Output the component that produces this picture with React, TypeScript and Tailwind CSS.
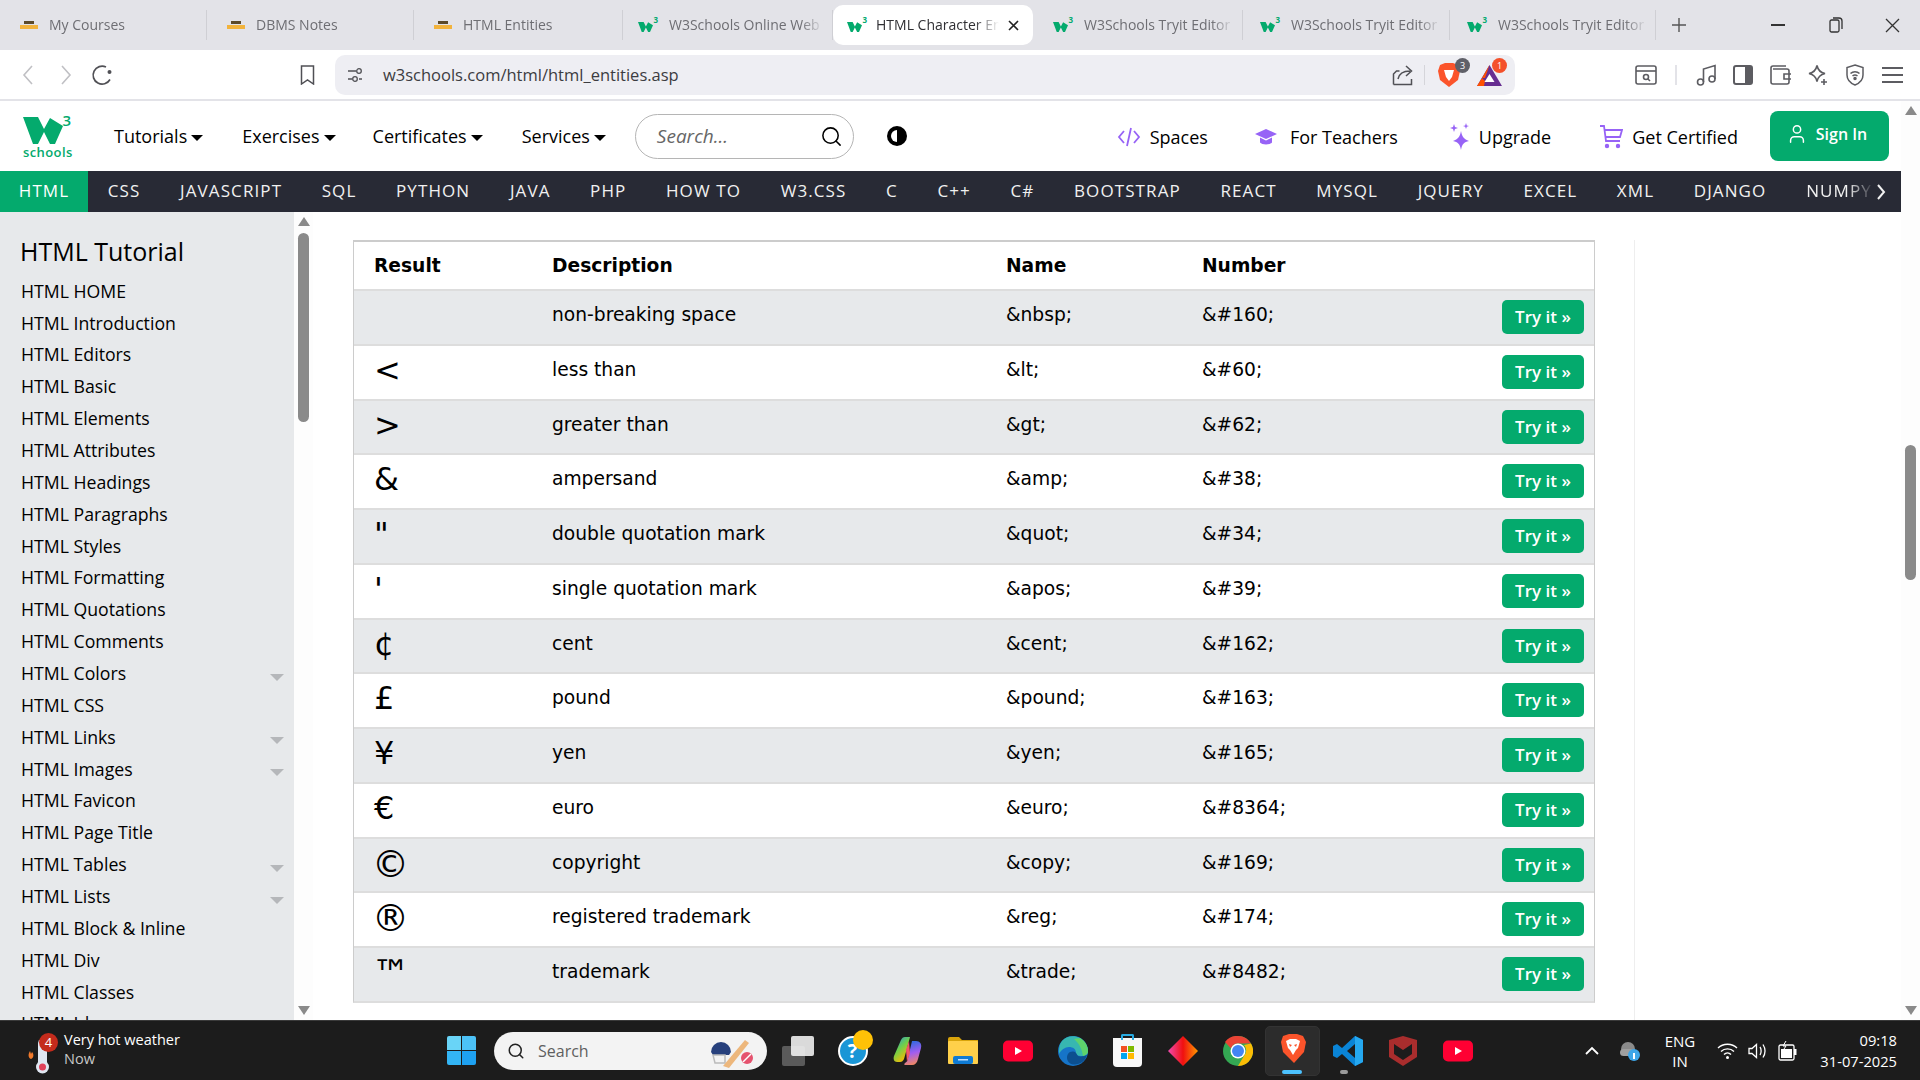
import type { ReactNode } from 'react';
import { Search, User } from 'lucide-react';

const ui = "font-['Open_Sans',sans-serif]";

const navItems = ['CSS', 'JAVASCRIPT', 'SQL', 'PYTHON', 'JAVA', 'PHP', 'HOW TO', 'W3.CSS', 'C', 'C++', 'C#', 'BOOTSTRAP', 'REACT', 'MYSQL', 'JQUERY', 'EXCEL', 'XML', 'DJANGO'];

const sideItems: [string, boolean?][] = [
  ['HTML HOME'], ['HTML Introduction'], ['HTML Editors'], ['HTML Basic'], ['HTML Elements'], ['HTML Attributes'],
  ['HTML Headings'], ['HTML Paragraphs'], ['HTML Styles'], ['HTML Formatting'], ['HTML Quotations'], ['HTML Comments'],
  ['HTML Colors', true], ['HTML CSS'], ['HTML Links', true], ['HTML Images', true], ['HTML Favicon'], ['HTML Page Title'],
  ['HTML Tables', true], ['HTML Lists', true], ['HTML Block & Inline'], ['HTML Div'], ['HTML Classes'], ['HTML Id'],
];

const rows = [
  ['\u00a0', 'non-breaking space', '&nbsp;', '&#160;'],
  ['<', 'less than', '&lt;', '&#60;'],
  ['>', 'greater than', '&gt;', '&#62;'],
  ['&', 'ampersand', '&amp;', '&#38;'],
  ['"', 'double quotation mark', '&quot;', '&#34;'],
  ["'", 'single quotation mark', '&apos;', '&#39;'],
  ['¢', 'cent', '&cent;', '&#162;'],
  ['£', 'pound', '&pound;', '&#163;'],
  ['¥', 'yen', '&yen;', '&#165;'],
  ['€', 'euro', '&euro;', '&#8364;'],
  ['©', 'copyright', '&copy;', '&#169;'],
  ['®', 'registered trademark', '&reg;', '&#174;'],
  ['™', 'trademark', '&trade;', '&#8482;'],
];

const wPath = 'M0 0H15L21 12 27 1 40 9 32 27H27L21 15 15 27H10Z';

function W3Mark() {
  return (
    <div className="relative w-[20px] h-[16px] shrink-0">
      <svg width="15" height="12" viewBox="0 0 40 27" className="absolute left-0 bottom-0"><path d={wPath} fill="#04AA6D" /></svg>
      <span className="absolute right-0 -top-[1px] text-[8px] leading-none font-bold text-[#04AA6D]">3</span>
    </div>
  );
}

function ApnaIcon() {
  return (
    <svg width="18" height="9" viewBox="0 0 18 9" className="shrink-0">
      <rect x="4" y="0" width="10" height="3" fill="#5c4a2a" />
      <rect x="0" y="4" width="18" height="4" fill="#f2b33c" />
    </svg>
  );
}

function Tab({ title, icon, width, pad = 'pl-5' }: { title: string; icon: ReactNode; width: string; pad?: string }) {
  return (
    <div className={`${width} ${pad} h-[30px] flex items-center pr-2 gap-[11px] border-r border-[#cfcfd4]`}>
      {icon}
      <span className="-mt-[2px] text-[14px] text-[#6e6e73] overflow-hidden whitespace-nowrap flex-1 [mask-image:linear-gradient(to_right,black_85%,transparent)]">{title}</span>
    </div>
  );
}

function TabBar() {
  return (
    <div className={`h-[50px] bg-[#e3e3e8] flex items-center ${ui}`}>
      <Tab title="My Courses" icon={<ApnaIcon />} width="w-[207px]" />
      <Tab title="DBMS Notes" icon={<ApnaIcon />} width="w-[207px]" />
      <Tab title="HTML Entities" icon={<ApnaIcon />} width="w-[209px]" />
      <Tab title="W3Schools Online Web Tutorials" icon={<W3Mark />} width="w-[210px]" pad="pl-[15px]" />
      <div className="w-[200px] h-[40px] bg-white rounded-[10px] flex items-center pl-[14px] pr-[14px] gap-[9px]">
        <W3Mark />
        <span className="-mt-[2px] text-[14px] text-[#2f2f33] overflow-hidden whitespace-nowrap flex-1 [mask-image:linear-gradient(to_right,black_80%,transparent)]">HTML Character Entities</span>
        <svg width="11" height="11" viewBox="0 0 11 11" stroke="#222" strokeWidth="1.6"><path d="M1 1l9 9M10 1l-9 9" /></svg>
      </div>
      <Tab title="W3Schools Tryit Editor" icon={<W3Mark />} width="w-[210px]" />
      <Tab title="W3Schools Tryit Editor" icon={<W3Mark />} width="w-[207px]" pad="pl-[17px]" />
      <Tab title="W3Schools Tryit Editor" icon={<W3Mark />} width="w-[206px]" pad="pl-[17px]" />
      <svg width="14" height="14" viewBox="0 0 14 14" stroke="#555" strokeWidth="1.4" className="ml-4"><path d="M7 0v14M0 7h14" /></svg>
      <div className="ml-auto flex items-center">
        <div className="w-[58px] flex justify-center"><div className="w-[14px] h-[1.5px] bg-[#333]" /></div>
        <div className="w-[57px] flex justify-center">
          <svg width="14" height="16" viewBox="0 0 14 16" fill="none" stroke="#333" strokeWidth="1.3"><rect x="1" y="3" width="9" height="12" rx="1.5" /><path d="M4 1h6a3 3 0 0 1 3 3v8" /></svg>
        </div>
        <div className="w-[56px] flex justify-center">
          <svg width="15" height="15" viewBox="0 0 15 15" stroke="#333" strokeWidth="1.3"><path d="M1 1l13 13M14 1L1 14" /></svg>
        </div>
      </div>
    </div>
  );
}

function AddressBar() {
  return (
    <div className={`h-[51px] bg-white border-b-[2px] border-[#e3e3e8] flex items-center ${ui}`}>
      <svg width="12" height="20" viewBox="0 0 12 20" fill="none" stroke="#c0c0c4" strokeWidth="1.6" className="ml-[22px]"><path d="M10 1L2 10l8 9" /></svg>
      <svg width="12" height="20" viewBox="0 0 12 20" fill="none" stroke="#c0c0c4" strokeWidth="1.6" className="ml-[26px]"><path d="M2 1l8 9-8 9" /></svg>
      <svg width="22" height="22" viewBox="0 0 22 22" fill="none" stroke="#505055" strokeWidth="1.7" className="ml-[19px]"><path d="M19 15.5A9 9 0 1 1 15 3" /><circle cx="18.5" cy="8" r="2" fill="#505055" stroke="none" /></svg>
      <svg width="15" height="20" viewBox="0 0 15 20" fill="none" stroke="#505055" strokeWidth="1.5" className="ml-[187px]"><path d="M1.5 1h12v18l-6-4-6 4z" /></svg>
      <div className="ml-[20px] w-[1180px] h-[40px] bg-[#eeeef3] rounded-[10px] flex items-center">
        <svg width="16" height="16" viewBox="0 0 16 16" fill="none" stroke="#505055" strokeWidth="1.3" className="ml-[12px]"><path d="M1 4h8M1 12h4M12 12h3" /><circle cx="12" cy="4" r="2.3" /><circle cx="8" cy="12" r="2.3" /></svg>
        <span className="ml-[20px] pt-[1px] text-[16.5px] text-[#3c3c41]">w3schools.com/html/html_entities.asp</span>
        <svg width="22" height="22" viewBox="0 0 22 22" fill="none" stroke="#505055" strokeWidth="1.5" className="ml-auto"><path d="M1.5 20.5V10l3-3h3M1.5 20.5h18V15M6 15c1-5 5-8 12-8M14 2l5.5 5-5.5 5" /></svg>
        <div className="w-[1px] h-[20px] bg-[#d5d5da] ml-[10px]" />
        <div className="relative ml-[12px] w-[26px] h-[26px]">
          <svg width="24" height="26" viewBox="0 0 24 26"><path d="M3 3l5-2h8l5 2 2 6-2 9-9 7-9-7-2-9z" fill="#fb542b" /><path d="M7 8h10l-2 7-3 4-3-4z" fill="#fff" /></svg>
          <div className="absolute -top-[4px] -right-[7px] w-[15px] h-[15px] rounded-full bg-[#5f6068] text-white text-[9px] leading-[15px] text-center">3</div>
        </div>
        <div className="relative ml-[14px] mr-[13px] w-[25px] h-[22px]">
          <svg width="25" height="22" viewBox="0 0 25 22"><path d="M12.5 1L25 22H0z" fill="#662d91" /><path d="M12.5 1L5 14h3z" fill="#ff5000" /><path d="M0 22l5-8 3 3-1 5z" fill="#ff5000" /><path d="M12.5 10l5 8h-10z" fill="#fff" /></svg>
          <div className="absolute -top-[6px] -right-[5px] w-[15px] h-[15px] rounded-full bg-[#f4502a] text-white text-[9px] leading-[15px] text-center">1</div>
        </div>
      </div>
      <svg width="22" height="20" viewBox="0 0 22 20" fill="none" stroke="#5c5c61" strokeWidth="1.6" className="ml-[120px]"><rect x="1" y="1" width="20" height="18" rx="2" /><path d="M1 6h20" /><circle cx="11" cy="12" r="2.5" /><path d="M13 14l2 2" /></svg>
      <div className="w-[2px] h-[20px] bg-[#e3e3e8] ml-[18px]" />
      <svg width="22" height="22" viewBox="0 0 22 22" fill="none" stroke="#5c5c61" strokeWidth="1.6" className="ml-[19px]"><circle cx="4.5" cy="18" r="3" /><circle cx="16" cy="15" r="3" /><path d="M7.5 18V5L19 1.5V15" /></svg>
      <div className="ml-[15px] w-[20px] h-[20px] border-[2px] border-[#5c5c61] rounded-[3px] flex justify-end"><div className="w-[6px] bg-[#5c5c61]" /></div>
      <svg width="22" height="20" viewBox="0 0 22 20" fill="none" stroke="#5c5c61" strokeWidth="1.6" className="ml-[17px]"><path d="M3 4h14a2 2 0 0 1 2 2v11a2 2 0 0 1-2 2H3a2 2 0 0 1-2-2V3a2 2 0 0 1 2-2h13" /><path d="M21 9h-7v5h7" /></svg>
      <svg width="22" height="22" viewBox="0 0 22 22" fill="none" stroke="#5c5c61" strokeWidth="1.6" className="ml-[15px]"><path d="M10 1.5c1 5 3 7 8 8-5 1-7 3-8 8-1-5-3-7-8-8 5-1 7-3 8-8zM17 15v6M14 18h6" /></svg>
      <svg width="20" height="22" viewBox="0 0 20 22" fill="none" stroke="#5c5c61" strokeWidth="1.5" className="ml-[16px]"><path d="M10 1l8 2.5V11c0 5-3 8-8 10-5-2-8-5-8-10V3.5z" /><path d="M5.5 9.5c2.5-2.5 6.5-2.5 9 0M7.500 12c1.500-1.300 3.500-1.300 5 0" /><circle cx="10" cy="14.5" r="1" fill="#5c5c61" /></svg>
      <div className="ml-[17px] w-[21px] flex flex-col gap-[5px]">
        <div className="h-[2px] bg-[#5c5c61]" /><div className="h-[2px] bg-[#5c5c61]" /><div className="h-[2px] bg-[#5c5c61]" />
      </div>
    </div>
  );
}

function Caret() {
  return <span className="inline-block ml-[4px] border-x-[6px] border-x-transparent border-t-[6px] border-t-black align-middle" />;
}

function SiteHeader() {
  return (
    <div className={`h-[70px] flex items-center ${ui}`}>
      <div className="relative ml-[23px] w-[48px] h-[44px] mt-[1px] shrink-0">
        <svg width="40" height="27" viewBox="0 0 40 27" className="absolute left-0 top-[2px]"><path d={wPath} fill="#04AA6D" /></svg>
        <span className="absolute right-0 -top-[2px] text-[15px] font-semibold leading-none text-[#04AA6D]">3</span>
        <span className="absolute left-0 bottom-0 text-[13px] font-semibold leading-none tracking-[0.4px] text-[#04AA6D]">schools</span>
      </div>
      <div className="ml-[43px] text-[18px] text-black whitespace-nowrap">Tutorials<Caret /></div>
      <div className="ml-[39px] text-[18px] text-black whitespace-nowrap">Exercises<Caret /></div>
      <div className="ml-[37px] text-[18px] text-black whitespace-nowrap">Certificates<Caret /></div>
      <div className="ml-[39px] text-[18px] text-black whitespace-nowrap">Services<Caret /></div>
      <div className="ml-[29px] w-[219px] h-[45px] rounded-[23px] border border-[#b5b5b5] flex items-center pl-[21px] pr-[10px]">
        <span className="text-[19px] italic text-[#666]">Search...</span>
        <Search size={23} strokeWidth={1.6} className="ml-auto text-black" />
      </div>
      <svg width="20" height="20" viewBox="0 0 20 20" className="ml-[33px]">
        <circle cx="10" cy="10" r="10" fill="#000" />
        <path d="M10 4a6 6 0 0 0 0 12z" fill="#fff" />
      </svg>
      <div className="ml-auto flex items-center text-[18px] text-black pt-[2px]">
        <svg width="24" height="22" viewBox="0 0 24 22" fill="none" stroke="#9763f6" strokeWidth="1.8"><path d="M7 5l-5 6 5 6M17 5l5 6-5 6M14 2l-4 18" /></svg>
        <span className="ml-[9px]">Spaces</span>
        <svg width="22" height="20" viewBox="0 0 22 20" fill="#9763f6" className="ml-[47px]"><path d="M11 2L22 7 11 12 0 7z" /><path d="M5 10.5v5c2 2.5 10 2.5 12 0v-5l-6 3z" /></svg>
        <span className="ml-[13px]">For Teachers</span>
        <svg width="22" height="28" viewBox="0 0 22 28" fill="#9763f6" className="ml-[52px]"><path d="M11 8c1 6 3 8 8 10-5 1-7 3-8 9-1-6-3-8-8-9 5-2 7-4 8-10z" /><path d="M4 1l1 3 3 1-3 1-1 3-1-3-3-1 3-1zM16 0l.8 2.5 2.2.5-2.2.8L16 6l-.8-2.2L13 3l2.2-.5z" /></svg>
        <span className="ml-[7px]">Upgrade</span>
        <svg width="24" height="24" viewBox="0 0 24 24" fill="none" stroke="#9763f6" strokeWidth="1.8" className="ml-[48px]"><path d="M1 1h4l2 15h14M5.5 5H23l-2 7H6.5" /><circle cx="8" cy="21" r="1.3" fill="#9763f6" /><circle cx="19" cy="21" r="1.3" fill="#9763f6" /></svg>
        <span className="ml-[9px]">Get Certified</span>
      </div>
      <div className="ml-[32px] mr-[12px] w-[119px] h-[50px] -mt-[1px] rounded-[8px] bg-[#04AA6D] text-white flex items-center justify-center gap-[8px] text-[16px] font-semibold pb-[3px] pr-[6px]">
        <User size={22} strokeWidth={1.6} />
        Sign In
      </div>
    </div>
  );
}

function TopNav() {
  return (
    <div className={`h-[41px] bg-[#282A35] text-[#f1f1f1] flex items-center text-[17px] tracking-[1.1px] whitespace-nowrap ${ui} overflow-hidden`}>
      <div className="h-full w-[88px] shrink-0 bg-[#04AA6D] text-white flex items-center justify-center pb-[2px]">HTML</div>
      {navItems.map((n) => (
        <div key={n} className="px-[19.8px] pb-[2px] shrink-0">{n}</div>
      ))}
      <div className="pl-[20px] pb-[2px] flex-1 min-w-0 overflow-hidden [mask-image:linear-gradient(to_right,black_70%,transparent)]">NUMPY</div>
      <svg width="10" height="16" viewBox="0 0 10 16" fill="none" stroke="#f1f1f1" strokeWidth="2" className="ml-[2px] mr-[15px] shrink-0"><path d="M2 1l6 7-6 7" /></svg>
    </div>
  );
}

function Triangle({ up, className = '' }: { up?: boolean; className?: string }) {
  return (
    <div className={`w-0 h-0 border-x-[6px] border-x-transparent ${up ? 'border-b-[9px] border-b-[#8a8a8a]' : 'border-t-[9px] border-t-[#8a8a8a]'} ${className}`} />
  );
}

function Sidebar() {
  return (
    <div className={`w-[294px] shrink-0 bg-[#e7e9eb] overflow-hidden text-black ${ui}`}>
      <div className="pl-[20px] pt-[21px] text-[25px] leading-[36px]">HTML Tutorial</div>
      <div className="mt-[6px]">
        {sideItems.map(([name, more]) => (
          <div key={name} className="h-[31.87px] pl-[21px] pr-[10px] flex items-center text-[17.7px]">
            {name}
            {more && <div className="ml-auto mt-[8px] w-0 h-0 border-x-[7px] border-x-transparent border-t-[7px] border-t-[#b5b7ba]" />}
          </div>
        ))}
      </div>
    </div>
  );
}

function Scrollbar({ thumb, className = '' }: { thumb: string; className?: string }) {
  return (
    <div className={`w-[19px] shrink-0 bg-[#fdfdfd] flex flex-col items-center pt-[5px] ${className}`}>
      <Triangle up />
      <div className={`w-[11px] rounded-[6px] bg-[#8a8a8a] ${thumb}`} />
      <Triangle className="mt-auto mb-[5px]" />
    </div>
  );
}

const glyphClass: Record<string, string> = {
  '©': 'w-[180px] -ml-[2px] text-[37px] leading-[52px]',
  '®': 'w-[180px] -ml-[2px] text-[37px] leading-[52px]',
  '™': 'w-[180px] -ml-[2px] text-[38px] leading-[52px]',
};

function EntityTable() {
  return (
    <div className="w-[1242px] ml-[40px] mt-[28px] border-x border-t-2 border-[#cccccc] border-b-2 border-b-[#dddddd] text-black font-['DejaVu_Sans',sans-serif] text-[18.67px]">
      <div className="h-[47px] flex items-center font-bold text-[18.67px] pl-[20px]">
        <div className="w-[178px]">Result</div>
        <div className="w-[454px]">Description</div>
        <div className="w-[196px]">Name</div>
        <div>Number</div>
      </div>
      {rows.map(([glyph, desc, name, num], i) => (
        <div
          key={desc}
          className={`h-[54.78px] flex items-start pl-[20px] pr-[10px] border-t-2 border-[#dddddd] ${i % 2 === 0 ? 'bg-[#e7e9eb]' : 'bg-white'}`}
        >
          <div className={`h-full shrink-0 ${glyphClass[glyph] ?? 'w-[178px] text-[32px] leading-[49px]'}`}>{glyph}</div>
          <div className="w-[454px] leading-[24px] pt-[12px]">{desc}</div>
          <div className="w-[196px] leading-[24px] pt-[12px]">{name}</div>
          <div className="leading-[24px] pt-[12px]">{num}</div>
          <div className={`ml-auto mt-[9px] w-[82px] h-[34px] rounded-[5px] bg-[#04AA6D] text-white text-[17px] leading-[33px] text-center font-semibold ${ui}`}>Try it »</div>
        </div>
      ))}
    </div>
  );
}

function Slot({ children, active, dot }: { children: ReactNode; active?: boolean; dot?: boolean }) {
  return (
    <div className="relative w-[55px] h-[50px] flex items-center justify-center">
      {active && <div className="absolute inset-0 rounded-[5px] bg-[#2c2c2c] border border-[#333]" />}
      <div className="relative">{children}</div>
      {active && <div className="absolute bottom-[2px] left-[17px] w-[20px] h-[4px] rounded-[2px] bg-[#4cc2ff]" />}
      {dot && <div className="absolute bottom-[2px] left-[20px] w-[8px] h-[4px] rounded-[2px] bg-[#9a9a9a]" />}
    </div>
  );
}

function YouTubeIcon() {
  return (
    <svg width="30" height="22" viewBox="0 0 30 22">
      <rect width="30" height="21" y="0.5" rx="5" fill="#ff0033" />
      <path d="M12 7l7 4-7 4z" fill="#fff" />
    </svg>
  );
}

function Taskbar() {
  return (
    <div className={`h-[60px] shrink-0 bg-[#1c1c1c] border-t border-[#3a3a3a] flex items-center text-white relative ${ui}`}>
      <div className="relative ml-[26px] w-[30px] h-[44px]">
        <svg width="30" height="44" viewBox="0 0 30 44" className="absolute left-0 top-[6px]">
          <path d="M4 16c-2 3-2 7 1 8 3-1 3-5 1-7l-1 2z" fill="#f0792b" />
          <rect x="12" y="4" width="9" height="28" rx="4.5" fill="#dfe6f1" />
          <circle cx="16.5" cy="32" r="6.5" fill="#dfe6f1" />
          <circle cx="16.5" cy="32" r="3.5" fill="#e0405a" />
        </svg>
        <div className="absolute left-[13px] top-[4px] w-[19px] h-[19px] rounded-full bg-[#c42b1c] text-white text-[13px] leading-[19px] text-center">4</div>
      </div>
      <div className="ml-[8px] w-[150px] text-[14.5px] leading-[19px] -mt-[4px]">
        <div>Very hot weather</div>
        <div className="text-[#c8c8c8]">Now</div>
      </div>
      <div className="ml-[233px] w-[29px] h-[29px] grid grid-cols-2 gap-[1px]">
        <div className="bg-[#69d4f7] rounded-tl-[2px]" /><div className="bg-[#4cc2f7] rounded-tr-[2px]" />
        <div className="bg-[#33b5f5] rounded-bl-[2px]" /><div className="bg-[#1ea1f1] rounded-br-[2px]" />
      </div>
      <div className="ml-[18px] w-[273px] h-[38px] rounded-[19px] bg-[#f3f3f3] flex items-center pl-[13px] pr-[10px] text-[#5f5f5f]">
        <Search size={18} strokeWidth={2} className="text-[#222]" />
        <span className="ml-[13px] text-[16px]">Search</span>
        <svg width="50" height="34" viewBox="0 0 50 34" className="ml-auto">
          <path d="M4 18a10 10 0 0 1 20 0l-2 3H6z" fill="#27407c" />
          <path d="M6 21h12v8H8z" fill="none" stroke="#bbb" strokeWidth="1.5" />
          <path d="M16 32L38 6l4 3-20 25z" fill="#edb77c" />
          <circle cx="40" cy="24" r="6" fill="#e5526e" />
          <path d="M36 28l8-8" stroke="#fff" strokeWidth="1.5" />
        </svg>
      </div>
      <div className="ml-[3px] flex items-center">
        <Slot>
          <div className="relative w-[32px] h-[30px]">
            <div className="absolute left-0 bottom-0 w-[23px] h-[20px] rounded-[2px] bg-[#5a5a5a]" />
            <div className="absolute right-0 top-0 w-[23px] h-[20px] rounded-[2px] bg-[#f0f0f0]/90" />
          </div>
        </Slot>
        <Slot>
          <div className="relative w-[30px] h-[30px] rounded-full bg-[#1a96d6] border-2 border-white text-white text-[20px] font-bold leading-[26px] text-center">
            ?
            <div className="absolute -top-[8px] left-[13px] w-[20px] h-[20px] rounded-full bg-[#ffc107]" />
          </div>
        </Slot>
        <Slot>
          <svg width="29" height="30" viewBox="0 0 29 30">
            <defs>
              <linearGradient id="copA" x1="0" y1="0" x2="0.6" y2="1">
                <stop offset="0" stopColor="#1f8fe8" /><stop offset="0.5" stopColor="#6fcf4a" /><stop offset="1" stopColor="#ffb900" />
              </linearGradient>
              <linearGradient id="copB" x1="0.4" y1="0" x2="0.6" y2="1">
                <stop offset="0" stopColor="#2b6be0" /><stop offset="0.5" stopColor="#a25df0" /><stop offset="1" stopColor="#f58a5a" />
              </linearGradient>
            </defs>
            <path d="M8 4c1-2 2-3 4-3h5l-4 15-2 7c-1 2-2 3-4 3H4c-3 0-4-3-3-6z" fill="url(#copA)" />
            <path d="M19 5h4c4 0 6 3 5 7l-3 11c-1 4-3 6-6 6h-7c-1 0-1-1 0-2 2-1 3-3 3-5z" fill="url(#copB)" />
            <path d="M13 14l3-9 1 12-3 9z" fill="#f0566a" />
          </svg>
        </Slot>
        <Slot>
          <svg width="30" height="27" viewBox="0 0 30 27">
            <path d="M0 2a2 2 0 0 1 2-2h9l3 3h16v6H0z" fill="#d9a40b" />
            <rect y="4" width="30" height="23" rx="1" fill="#ffd04a" />
            <rect x="5" y="19" width="20" height="8" rx="2" fill="#0f7bd4" />
            <rect x="10" y="22" width="10" height="1.5" fill="#bfe0ff" />
          </svg>
        </Slot>
        <Slot><YouTubeIcon /></Slot>
        <Slot>
          <svg width="30" height="30" viewBox="0 0 30 30">
            <circle cx="15" cy="15" r="15" fill="#1674c8" />
            <path d="M4 5C8 0 16-1 22 2c5 3 8 8 8 13 0 4-3 5-7 5-3 0-5-1-5-3 0-4-3-6-7-6-4 0-8 3-10 7 0-5 0-9 3-13z" fill="#37b7b0" />
            <path d="M22 2c5 3 8 8 8 13 0 3-2 4-5 5-1-6-3-12-9-17z" fill="#5ed36c" />
            <path d="M13 28c-4-2-5-7-3-10 2-3 6-3 8-1l2 3c3 1 7 0 9-1-2 7-9 11-16 9z" fill="#0c4f8f" />
          </svg>
        </Slot>
        <Slot>
          <div className="relative w-[29px] h-[29px] mt-[3px] bg-[#f7f7f7] rounded-b-[4px] grid grid-cols-2 gap-[1px] p-[8px]">
            <div className="absolute -top-[4px] left-[8px] w-[13px] h-[6px] border-x-2 border-t-2 border-[#29abe2] rounded-t-[2px]" />
            <div className="bg-[#f25022]" /><div className="bg-[#7fba00]" /><div className="bg-[#00a4ef]" /><div className="bg-[#ffb900]" />
          </div>
        </Slot>
        <Slot>
          <svg width="30" height="30" viewBox="0 0 30 30">
            <defs>
              <linearGradient id="dia" x1="0" y1="0" x2="1" y2="0">
                <stop offset="0" stopColor="#f04bb0" /><stop offset="0.5" stopColor="#f01010" /><stop offset="1" stopColor="#ff9a00" />
              </linearGradient>
            </defs>
            <path d="M15 0l15 15-15 15L0 15z" fill="url(#dia)" />
          </svg>
        </Slot>
        <Slot>
          <svg width="30" height="30" viewBox="0 0 30 30">
            <circle cx="15" cy="15" r="15" fill="#34a853" />
            <path d="M15 0a15 15 0 0 1 13 7.5H15a7.5 7.5 0 0 0-7 5L2 6A15 15 0 0 1 15 0z" fill="#ea4335" />
            <path d="M28 7.5A15 15 0 0 1 15 30l6.5-11A7.5 7.5 0 0 0 21 9z" fill="#fbbc05" />
            <circle cx="15" cy="15" r="7.5" fill="#fff" />
            <circle cx="15" cy="15" r="6" fill="#4285f4" />
          </svg>
        </Slot>
        <Slot active>
          <svg width="26" height="30" viewBox="0 0 26 30" className="-mt-[6px]">
            <path d="M3 3l6-2h8l6 2 3 6-2 10-10 11L3 19 1 9z" fill="#fb542b" />
            <path d="M6 8l4-2h6l4 2-2 7-2 2-3 5-3-5-2-2z" fill="#fff" />
            <path d="M9 11l3 1-2 2zM17 11l-3 1 2 2z" fill="#fb542b" />
          </svg>
        </Slot>
        <Slot dot>
          <svg width="30" height="30" viewBox="0 0 30 30">
            <path d="M22 0l8 4v22l-8 4L9 18l-5 4-4-2v-10l4-2 5 4z" fill="#0a84d6" />
            <path d="M22 0l8 4v22l-8 4z" fill="#25a8f0" />
            <path d="M22 8l-8 7 8 7z" fill="#1c1c1c" />
          </svg>
        </Slot>
        <Slot>
          <svg width="28" height="30" viewBox="0 0 28 30">
            <path d="M0 4l14-4 14 4v17l-14 9-14-9z" fill="#a92d2d" />
            <path d="M5 8v10l9 6 9-6V8l-9 6z" fill="#1c1c1c" />
          </svg>
        </Slot>
        <Slot><YouTubeIcon /></Slot>
      </div>
      <svg width="14" height="9" viewBox="0 0 14 9" fill="none" stroke="#fff" strokeWidth="1.8" className="ml-[100px]"><path d="M1 8l6-6 6 6" /></svg>
      <svg width="22" height="22" viewBox="0 0 22 22" className="ml-[20px]">
        <circle cx="9" cy="9" r="7" fill="#8a8a8a" />
        <rect x="1" y="9" width="14" height="7" rx="3.5" fill="#a0a0a0" />
        <circle cx="15" cy="15" r="6" fill="#3ea6e8" />
        <rect x="14" y="13" width="2" height="6" fill="#fff" />
      </svg>
      <div className="ml-[22px] w-[34px] text-center text-[15px] leading-[20px]">ENG<br />IN</div>
      <svg width="21" height="20" viewBox="0 0 21 20" fill="none" stroke="#fff" strokeWidth="1.4" className="ml-[20px]"><path d="M1 7c5-5 14-5 19 0M4 10.5c3.5-3.5 9.5-3.5 13 0M7 13.5c2-2 5-2 7 0" /><circle cx="10.5" cy="16.5" r="1.5" fill="#fff" stroke="none" /></svg>
      <svg width="20" height="18" viewBox="0 0 20 18" fill="none" stroke="#fff" strokeWidth="1.3" className="ml-[10px]"><path d="M1 6.5v5h3l4.5 4V2.5L4 6.5zM12 5c1.5 2 1.5 6 0 8M15 2.5c2.5 4 2.5 9 0 13" /></svg>
      <svg width="20" height="22" viewBox="0 0 20 22" className="ml-[10px]"><rect x="1" y="5" width="15" height="15" rx="1.5" fill="none" stroke="#fff" strokeWidth="1.3" /><rect x="3" y="9" width="11" height="9" fill="#fff" /><rect x="16" y="9" width="2.5" height="6" fill="#fff" /><path d="M8 1L5 6h3L6 9" stroke="#fff" fill="none" /></svg>
      <div className="ml-auto mr-[23px] text-right text-[14.7px] leading-[21px]">09:18<br />31-07-2025</div>
    </div>
  );
}

export default function App() {
  return (
    <div className="w-[1920px] h-[1080px] overflow-hidden flex flex-col bg-white">
      <TabBar />
      <AddressBar />
      <div className="flex-1 min-h-0 flex">
        <div className="flex-1 min-w-0 flex flex-col">
          <SiteHeader />
          <TopNav />
          <div className="flex-1 min-h-0 flex">
            <Sidebar />
            <Scrollbar thumb="h-[189px] mt-[7px]" />
            <div className="flex-1 min-w-0">
              <div className="w-[1322px] h-full border-r border-[#eeeeee]">
                <EntityTable />
              </div>
            </div>
          </div>
        </div>
        <Scrollbar thumb="h-[135px] mt-[330px]" />
      </div>
      <Taskbar />
    </div>
  );
}
